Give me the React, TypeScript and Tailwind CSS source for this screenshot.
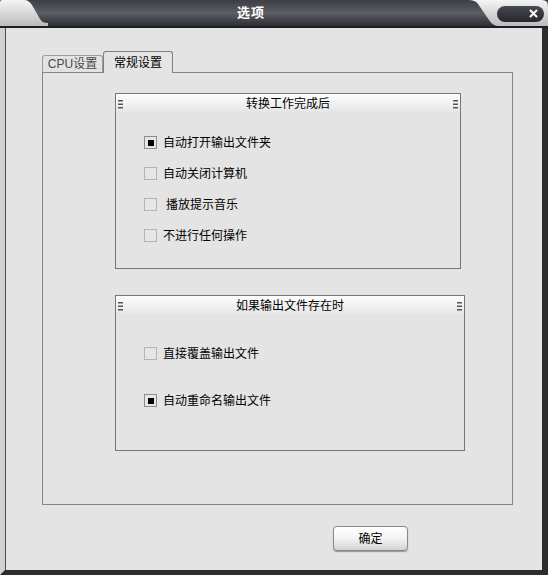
import React from 'react';

const font = "font-['Liberation_Sans','Noto_Sans_CJK_SC',sans-serif]";

const Grip = () => (
  <svg width="5" height="9" viewBox="0 0 5 9" className="shrink-0">
    <rect x="0" y="0" width="5" height="1.5" fill="#555" />
    <rect x="0" y="3.5" width="5" height="1.5" fill="#555" />
    <rect x="0" y="7" width="5" height="1.5" fill="#555" />
  </svg>
);

const Check = ({ checked, label, shift = 0 }: { checked?: boolean; label: string; shift?: number }) => (
  <div className="flex items-center h-[13px]">
    <div
      className={`w-[13px] h-[13px] border flex items-center justify-center bg-[#e6e6e6] ${
        checked ? 'border-[#8c8c8c]' : 'border-[#b4b4b4]'
      }`}
    >
      {checked && <div className="w-[6px] h-[6px] bg-black" />}
    </div>
    <span className="text-[12px] text-black leading-none" style={{ marginLeft: 6 + shift }}>
      {label}
    </span>
  </div>
);

const GroupHeader = ({ title }: { title: string }) => (
  <div className="h-[20px] flex items-center justify-between px-[2px] bg-linear-to-b from-[#fdfdfd] via-[#f1f1f1] to-[#e2e2e2]">
    <Grip />
    <span className="text-[12px] text-black leading-none">{title}</span>
    <Grip />
  </div>
);

export default function App() {
  return (
    <div className={`w-[548px] h-[575px] relative overflow-hidden bg-[#e4e4e4] flex flex-col ${font}`}>
      {/* title bar */}
      <div className="h-[28px] shrink-0 relative bg-linear-to-b from-[#3c3e44] via-[#5b5e65] to-[#2c2e33] border-b-2 border-[#1e1f23] flex items-center justify-center pr-[46px]">
        <span className="text-white text-[13px] font-bold tracking-[1px]">选项</span>
        <svg className="absolute left-0 top-0" width="50" height="26" viewBox="0 0 50 26">
          <defs>
            <linearGradient id="lc" x1="0" y1="0" x2="0" y2="1">
              <stop offset="0" stopColor="#f4f4f4" />
              <stop offset="1" stopColor="#bcbcbc" />
            </linearGradient>
          </defs>
          <path d="M0 2 Q0 0 2 0 H24 C28 0 30 2 32 5 L40 19 C42 22 44 23 48 23 V26 H0 Z" fill="url(#lc)" />
        </svg>
        <svg className="absolute right-0 top-0" width="88" height="26" viewBox="0 0 88 26">
          <defs>
            <linearGradient id="rc" x1="0" y1="0" x2="0" y2="1">
              <stop offset="0" stopColor="#f4f4f4" />
              <stop offset="1" stopColor="#bcbcbc" />
            </linearGradient>
            <linearGradient id="pill" x1="0" y1="0" x2="0" y2="1">
              <stop offset="0" stopColor="#464950" />
              <stop offset="1" stopColor="#25272b" />
            </linearGradient>
          </defs>
          <path d="M7 0 H82 Q88 0 88 6 V26 H40 C34 26 32 24 29 20 L18 4 C16 1 13 0 7 0 Z" fill="url(#rc)" />
          <rect x="37" y="6" width="47" height="16" rx="8" fill="url(#pill)" />
          <path d="M70.5 10.5 L76.5 16.5 M76.5 10.5 L70.5 16.5" stroke="white" strokeWidth="2" strokeLinecap="round" />
        </svg>
      </div>

      {/* body */}
      <div className="flex-1 flex border-l-[5px] border-l-[#d2d2d2] border-r-[6px] border-r-[#2b2d31] border-b-[5px] border-b-[#2b2d31]">
        <div className="flex-1 border-l border-[#4d4d4d] bg-[#e4e4e4] pt-[23px]">
          {/* tabs */}
          <div className="flex items-end ml-[36px] h-[21px]">
            <div className="h-[17px] w-[61px] border border-b-0 border-[#9c9c9c] rounded-t-[3px] flex items-center justify-center text-[12px] text-[#4a4a4a] bg-[#e2e2e2]">
              CPU设置
            </div>
            <div className="relative z-10 -mb-px h-[22px] w-[70px] border border-b-0 border-[#7f7f7f] rounded-t-[3px] flex items-center justify-center text-[12px] text-black bg-[#e4e4e4]">
              常规设置
            </div>
          </div>

          {/* panel */}
          <div className="ml-[36px] w-[471px] h-[433px] border border-[#858585] pl-[72px] pt-[20px]">
            <div className="w-[346px] h-[176px] border border-[#777]">
              <GroupHeader title="转换工作完成后" />
              <div className="pl-[28px] pt-[22px] flex flex-col gap-[18px]">
                <Check checked label="自动打开输出文件夹" />
                <Check label="自动关闭计算机" />
                <Check label="播放提示音乐" shift={3} />
                <Check label="不进行任何操作" />
              </div>
            </div>

            <div className="mt-[26px] w-[350px] h-[156px] border border-[#777]">
              <GroupHeader title="如果输出文件存在时" />
              <div className="pl-[28px] pt-[31px] flex flex-col gap-[34px]">
                <Check label="直接覆盖输出文件" />
                <Check checked label="自动重命名输出文件" />
              </div>
            </div>
          </div>

          {/* button */}
          <button className="mt-[21px] ml-[327px] w-[75px] h-[25px] rounded-[4px] border border-[#8a8a8a] bg-linear-to-b from-white via-[#f3f3f3] to-[#d4d4d4] shadow-[0_1px_1px_rgba(0,0,0,0.35)] text-[12px] text-black flex items-center justify-center">
            确定
          </button>
        </div>
      </div>
    </div>
  );
}
